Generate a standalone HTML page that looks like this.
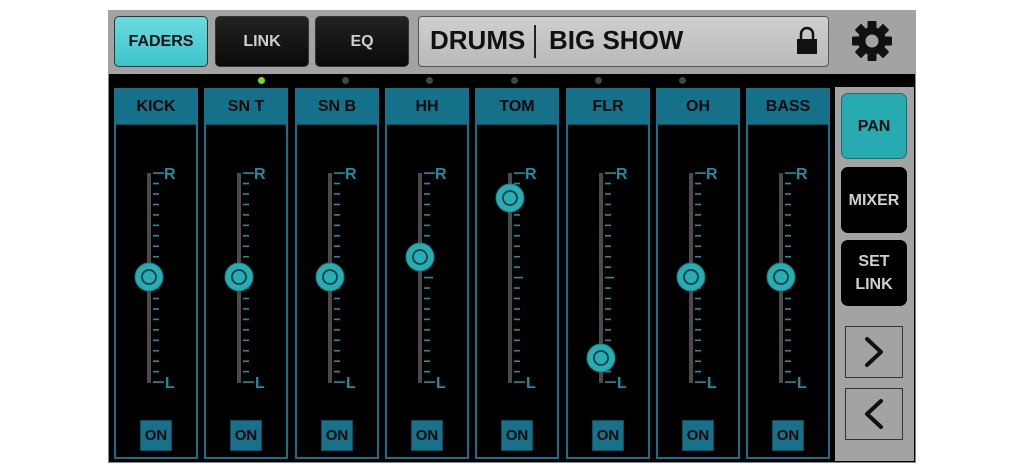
<!DOCTYPE html>
<html><head><meta charset="utf-8"><style>
*{margin:0;padding:0;box-sizing:border-box}
body{width:1024px;height:473px;background:#fff;position:relative;overflow:hidden;font-family:"Liberation Sans",Arial,sans-serif;font-weight:bold}
.abs{position:absolute}
#frame{left:108px;top:10px;width:808px;height:453px;background:#000;border:1px solid #888}
#top{left:108px;top:10px;width:808px;height:64px;background:#a3a3a3}
.tb{top:16px;height:51px;width:94px;border-radius:5px;display:flex;align-items:center;justify-content:center;font-size:16px;border:1px solid #333}
.dark{background:linear-gradient(#222,#0a0a0a);color:#cfcfcf}
.cyan{background:linear-gradient(#6adbe0,#3ec4cc);color:#111}
#title{left:418px;top:16px;width:411px;height:51px;border-radius:4px;border:1px solid #555;background:linear-gradient(#cfcfcf,#b9b9b9)}
.strip{top:88px;width:84px;height:371px;border:2px solid #16708a}
.hdr{position:absolute;left:0;top:0;width:80px;height:35px;background:#15708a;border-bottom:1px solid #0d4d60;color:#0a0a0a;font-size:16px;display:flex;align-items:center;justify-content:center}
.on{position:absolute;left:24px;top:330px;width:32px;height:31px;background:#18718b;border:1px solid #0d4d60;color:#0a0a0a;font-size:15px;display:flex;align-items:center;justify-content:center}
#rp{left:835px;top:87px;width:79px;height:374px;background:#a3a3a3}
.rb{left:841px;width:66px;height:66px;border-radius:7px;display:flex;align-items:center;justify-content:center;text-align:center;font-size:16px;line-height:23px}
.ab{left:845px;width:58px;height:52px;border:1px solid #333}
.dot{width:7px;height:7px;border-radius:50%;background:#444;top:77px}
</style></head><body>
<div id="frame" class="abs"></div>
<div id="top" class="abs"></div>
<div class="abs tb cyan" style="left:114px">FADERS</div>
<div class="abs tb dark" style="left:215px">LINK</div>
<div class="abs tb dark" style="left:315px">EQ</div>
<div id="title" class="abs"></div>
<div class="abs" style="left:430px;top:25px;font-size:26px;color:#111">DRUMS</div>
<div class="abs" style="left:534px;top:25px;width:2px;height:33px;background:#222"></div>
<div class="abs" style="left:549px;top:25px;font-size:26px;color:#111">BIG SHOW</div>
<svg class="abs" style="left:796px;top:26px" width="22" height="30" viewBox="0 0 22 30"><path d="M5 14V8a6 6 0 0 1 12 0V14" fill="none" stroke="#111" stroke-width="2.5"/><rect x="1" y="13" width="20" height="15" fill="#111"/></svg>
<svg class="abs" style="left:851px;top:20px" width="42" height="42" viewBox="-21 -21 42 42"><g fill="#111"><circle r="14"/><g id="t"><rect x="-4.5" y="-20" width="9" height="9" rx="1"/></g><use href="#t" transform="rotate(45)"/><use href="#t" transform="rotate(90)"/><use href="#t" transform="rotate(135)"/><use href="#t" transform="rotate(180)"/><use href="#t" transform="rotate(225)"/><use href="#t" transform="rotate(270)"/><use href="#t" transform="rotate(315)"/></g><circle r="6.5" fill="#a3a3a3"/></svg>
<div id="strips"></div>
<div id="rp" class="abs"></div>
<div class="abs rb" style="top:93px;background:#27aab0;border:1px solid #1a6f74;color:#111">PAN</div>
<div class="abs rb" style="top:167px;background:#000;color:#cfcfcf">MIXER</div>
<div class="abs rb" style="top:240px;background:#000;color:#cfcfcf">SET<br>LINK</div>
<div class="abs ab" style="top:326px"><svg width="56" height="50"><path d="M21 12L35 25L21 38" fill="none" stroke="#111" stroke-width="4" stroke-linecap="round" stroke-linejoin="round"/></svg></div>
<div class="abs ab" style="top:388px"><svg width="56" height="50"><path d="M35 12L21 25L35 38" fill="none" stroke="#111" stroke-width="4" stroke-linecap="round" stroke-linejoin="round"/></svg></div>
<script>
var names=["KICK","SN T","SN B","HH","TOM","FLR","OH","BASS"];
var knobs=[277,277,277,257,198,358,277,277];
var h="";
for(var i=0;i<8;i++){
 var L=114+Math.round(i*90.3);
 h+='<div class="abs strip" style="left:'+L+'px"><div class="hdr">'+names[i]+'</div><div class="on">ON</div></div>';
 var cx=L+35;
 var s='<svg class="abs" style="left:'+(cx-20)+'px;top:160px" width="60" height="235">';
 s+='<rect x="18" y="13" width="4" height="210" fill="#4a4a4a"/>';
 for(var k=0;k<=20;k++){var y=13+k*10.45;var w=(k==0||k==20)?11:(k==10?9:6);s+='<rect x="24" y="'+(y-0.7)+'" width="'+w+'" height="1.6" fill="#1f8ea0"/>';}
 s+='<text x="35" y="19" font-size="16" fill="#1f8ea0" font-family="Liberation Sans" font-weight="bold">R</text>';
 s+='<text x="36" y="228" font-size="16" fill="#1f8ea0" font-family="Liberation Sans" font-weight="bold">L</text>';
 var ky=knobs[i]-160;
 s+='<circle cx="20" cy="'+ky+'" r="14" fill="#27aeb4" stroke="#1a7a80" stroke-width="1"/><circle cx="20" cy="'+ky+'" r="7" fill="none" stroke="#0d3c40" stroke-width="1.8"/>';
 s+='</svg>';
 h+=s;
}
var dx=[261,345,429,514,598,682];
for(var j=0;j<6;j++)h+='<div class="abs dot" style="left:'+(dx[j]-3)+'px;'+(j==0?'background:#6fe01c':'')+'"></div>';
document.getElementById("strips").innerHTML=h;
</script>
</body></html>
